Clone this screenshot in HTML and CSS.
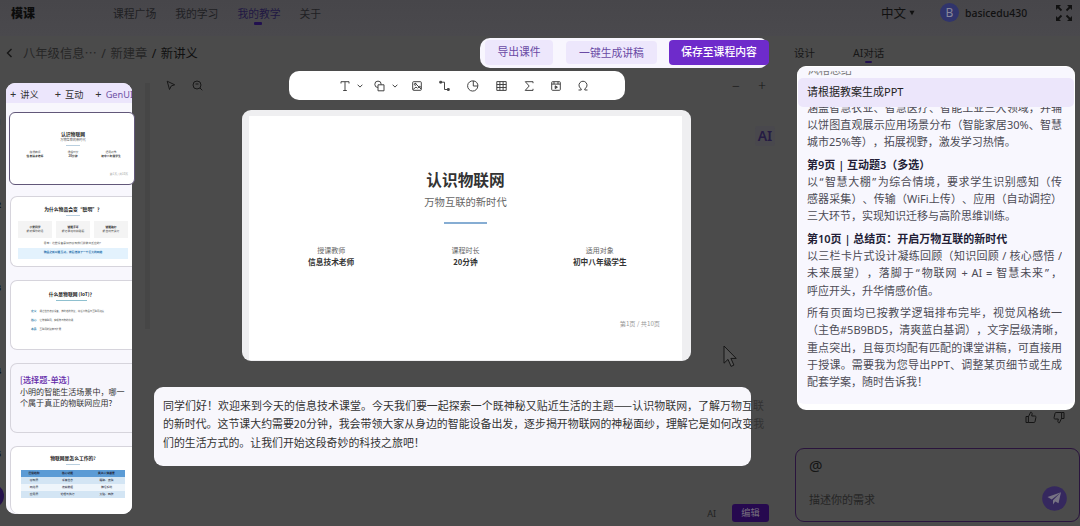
FILE: index.html
```
<!DOCTYPE html>
<html>
<head>
    <meta charset="UTF-8">
    <title>模课</title>
    <link rel="stylesheet" href="styles.css">
</head>
<body>
    <header class="topbar">
        <div class="logo">模课</div>
        <nav class="menu">
            <a>课程广场</a>
            <a>我的学习</a>
            <a class="active">我的教学</a>
            <a>关于</a>
        </nav>
        <div class="lang">中文<svg width="6" height="6" viewBox="0 0 6 6"><path d="M0.5 0.8h5L3 5.2z" fill="#111"/></svg></div>
        <div class="avatar">B</div>
        <div class="username">basicedu430</div>
        <svg class="expand" width="16" height="16" viewBox="0 0 16 16" fill="#111" stroke="#111" stroke-width="1.8">
            <path d="M2 2l3.5 3.5M14 2l-3.5 3.5M2 14l3.5-3.5M14 14l-3.5-3.5"/>
            <path stroke="none" d="M0 0h5L0 5zM16 0v5L11 0zM0 16v-5l5 5zM16 16h-5l5-5z"/>
        </svg>
    </header>

    <main class="workspace">
        <section class="editor">
            <div class="titlebar">
                <div class="breadcrumb">
                    <svg width="7" height="10" viewBox="0 0 7 10"><path d="M5.5 1L1.5 5l4 4" fill="none" stroke="#161616" stroke-width="1.4"/></svg>
                    <span>八年级信息⋯</span><span class="sep">/</span><span>新建章</span><span class="sep dark">/</span><span class="current">新讲义</span>
                </div>
                <div class="actions">
                    <button class="btn export">导出课件</button>
                    <button class="btn script">一键生成讲稿</button>
                    <button class="btn save">保存至课程内容</button>
                </div>
            </div>

            <div class="editor-body">
                <div class="numbers">
                    <span>1</span><span>2</span><span>3</span><span>4</span><span>5</span>
                    <i class="bubble-dot"></i>
                </div>
                <aside class="outline">
                    <div class="outline-tabs"><span><b>+</b>讲义</span><span><b>+</b>互动</span><span class="gen"><b>+</b>GenUI</span></div>
                    <div class="thumb selected">
                        <h4>认识物联网</h4>
                        <p class="sub">万物互联的新时代</p>
                        <hr>
                        <div class="trio"><p>授课教师<b>信息技术老师</b></p><p>课程时长<b>20分钟</b></p><p>适用对象<b>初中八年级学生</b></p></div>
                        <p class="page">第1页 / 共10页</p>
                    </div>
                    <div class="thumb why">
                        <h4>为什么物品会变“聪明”？</h4>
                        <hr>
                        <div class="boxes"><p><b>小爱同学</b>能听懂你的话</p><p><b>智能手环</b>能记录运动和睡眠</p><p><b>智能路灯</b>能自动开关灯</p></div>
                        <p class="ask">思考：这些设备是如何感知我们并做出反应的？</p>
                        <p class="answer">物品之所以能互动，背后连接了一个巨大的网络</p>
                    </div>
                    <div class="thumb what">
                        <h4>什么是物联网 (IoT)？</h4>
                        <hr>
                        <p><b>定义</b>通过信息传感设备，按约定的协议，将任何物品与互联网连接</p>
                        <p><b>核心</b>让物体联网，实现物与物的沟通</p>
                        <p><b>本质</b>互联网的延伸与扩展</p>
                    </div>
                    <div class="thumb quiz">
                        <h5>[选择题-单选]</h5>
                        <p>小明的智能生活场景中，哪一</p>
                        <p>个属于真正的物联网应用?</p>
                    </div>
                    <div class="thumb how">
                        <h4>物联网是怎么工作的?</h4>
                        <hr>
                        <table>
                            <tr><th>层级结构</th><th>核心功能</th><th>类比人体器官</th></tr>
                            <tr><td>感知层</td><td>采集信息</td><td>眼睛、皮肤</td></tr>
                            <tr><td>网络层</td><td>传输数据</td><td>神经系统</td></tr>
                            <tr><td>应用层</td><td>处理与执行</td><td>大脑、四肢</td></tr>
                        </table>
                    </div>
                </aside>
                <div class="scroll-thumb"></div>

                <div class="stage">
                    <div class="tools-row">
                        <div class="pointers">
                            <svg width="10" height="11" viewBox="0 0 10 11"><path d="M1.2 1.2l7.5 3.6-3.4 1.1-1.8 3.6z"/></svg>
                            <svg width="11" height="11" viewBox="0 0 11 11"><circle cx="5" cy="5" r="4"/><path d="M8 8l2.3 2.3M3.5 4h3"/></svg>
                        </div>
                        <div class="tools">
                            <svg width="10" height="12" viewBox="0 0 10 12"><path d="M1 3.5V1.7h8v1.8M5 1.7v8.8M3.2 10.5h3.6"/></svg>
                            <svg class="caret" width="6" height="4" viewBox="0 0 6 4"><path d="M.6.7L3 3.1 5.4.7"/></svg>
                            <svg class="shapes" width="11" height="12" viewBox="0 0 11 12"><circle cx="4" cy="4.3" r="3.2"/><path d="M4 4.8h6v6H4z" fill="#fff"/></svg>
                            <svg class="caret" width="6" height="4" viewBox="0 0 6 4"><path d="M.6.7L3 3.1 5.4.7"/></svg>
                            <svg class="image" width="10" height="12" viewBox="0 0 10 12"><rect x=".7" y="1.7" width="8.6" height="8.6" rx=".8"/><circle cx="3.3" cy="4.3" r="1"/><path d="M1 9.6l3-2.6 1.4 1.2M3 3l6 6M5.8 8.2l1.7-2 1.7 1.2"/></svg>
                            <svg width="11" height="12" viewBox="0 0 11 12"><path d="M2 2.2h3.5v7.3H9"/><path d="M.8 1.3h1.7v1.8H.8zM8.5 8.6h1.7v1.8H8.5z" fill="#444"/></svg>
                            <svg width="12" height="12" viewBox="0 0 12 12"><path d="M6.3.9A5.1 5.1 0 1 0 10.8 6"/><path d="M6.3.9V6h4.6A4.8 4.8 0 0 0 6.3.9z"/></svg>
                            <svg width="11" height="12" viewBox="0 0 11 12"><path d="M.8 1.6h9.4v8.8H.8zM.8 4.5h9.4M.8 7.5h9.4M3.9 1.6v8.8M7.1 1.6v8.8"/></svg>
                            <svg width="10" height="12" viewBox="0 0 10 12"><path d="M9 3.2V1.7H1.3L5.2 6l-4 4.4H9V8.8"/></svg>
                            <svg width="10" height="12" viewBox="0 0 10 12"><rect x=".7" y="1.7" width="8.6" height="8.6" rx=".8"/><path d="M.7 4.1h8.6M3 1.7v2.4M7 1.7v2.4"/><path d="M4.2 5.8v2.8l2.2-1.4z" fill="#444"/></svg>
                            <svg width="10" height="12" viewBox="0 0 10 12"><path d="M.5 10h2.7V8.8A4 4 0 1 1 6.8 8.8V10h2.7"/></svg>
                        </div>
                        <div class="zoom"><span>−</span><span>+</span></div>
                    </div>

                    <div class="slide-row">
                        <div class="slide-frame">
                            <div class="slide">
                                <h1>认识物联网</h1>
                                <p class="subtitle">万物互联的新时代</p>
                                <hr>
                                <div class="facts">
                                    <div>授课教师<b>信息技术老师</b></div>
                                    <div>课程时长<b>20分钟</b></div>
                                    <div>适用对象<b>初中八年级学生</b></div>
                                </div>
                                <p class="page">第1页 / 共10页</p>
                            </div>
                        </div>
                        <div class="ai-badge">AI</div>
                    </div>

                    <div class="notes">
                        <p class="full">同学们好！欢迎来到今天的信息技术课堂。今天我们要一起探索一个既神秘又贴近生活的主题——认识物联网，了解万物互联</p>
                        <p class="full">的新时代。这节课大约需要20分钟，我会带领大家从身边的智能设备出发，逐步揭开物联网的神秘面纱，理解它是如何改变我</p>
                        <p>们的生活方式的。让我们开始这段奇妙的科技之旅吧！</p>
                    </div>

                    <div class="bottom"><span>AI</span><button class="edit">编辑</button></div>
                </div>
            </div>
        </section>

        <section class="assistant">
            <div class="tabs"><span>设计</span><span class="active">AI对话</span></div>
            <div class="chat">
                <div class="previous"><p>风格总结</p></div>
                <div class="question">请根据教案生成PPT</div>
                <div class="answer-text">
                    <p class="full">涵盖智慧农业、智慧医疗、智能工业三大领域，并辅</p>
                    <p class="full">以饼图直观展示应用场景分布（智能家居30%、智慧</p>
                    <p>城市25%等），拓展视野，激发学习热情。</p>
                    <h3>第9页 | 互动题3（多选）</h3>
                    <p class="full">以<q>“</q>智慧大棚<q>”</q>为综合情境，要求学生识别感知（传</p>
                    <p class="full">感器采集）、传输（WiFi上传）、应用（自动调控）</p>
                    <p>三大环节，实现知识迁移与高阶思维训练。</p>
                    <h3>第10页 | 总结页：开启万物互联的新时代</h3>
                    <p class="full">以三栏卡片式设计凝练回顾（知识回顾 / 核心感悟 /</p>
                    <p class="full">未来展望），落脚于<q>“</q>物联网 + AI = 智慧未来<q>”</q>，</p>
                    <p>呼应开头，升华情感价值。</p>
                    <p class="full gap">所有页面均已按教学逻辑排布完毕，视觉风格统一</p>
                    <p class="full">（主色#5B9BD5，清爽蓝白基调），文字层级清晰，</p>
                    <p class="full">重点突出，且每页均配有匹配的课堂讲稿，可直接用</p>
                    <p class="full">于授课。需要我为您导出PPT、调整某页细节或生成</p>
                    <p>配套学案，随时告诉我！</p>
                </div>
            </div>
            <div class="feedback">
                <svg width="12" height="13" viewBox="0 0 12 13"><path d="M1 5.5h2.4v6H1zM3.4 5.8L5.6 1.2c1.3 0 1.7.8 1.5 1.8l-.4 2h3.1c.9 0 1.3.6 1.1 1.4l-.9 4.2c-.1.6-.5.9-1.1.9H3.4"/></svg>
                <svg class="down" width="12" height="13" viewBox="0 0 12 13"><path d="M1 5.5h2.4v6H1zM3.4 5.8L5.6 1.2c1.3 0 1.7.8 1.5 1.8l-.4 2h3.1c.9 0 1.3.6 1.1 1.4l-.9 4.2c-.1.6-.5.9-1.1.9H3.4"/></svg>
            </div>
            <div class="prompt">
                <div class="at">@</div>
                <div class="prompt-row">
                    <span>描述你的需求</span>
                    <svg width="25" height="25" viewBox="0 0 25 25"><circle cx="12.5" cy="12.5" r="12.3" fill="#35285e"/><path d="M19 6.3L5.5 11l4.2 2.5zM19 6.3l-8 8v4.2l2.2-3 3.3 1.7z" fill="#777384"/></svg>
                </div>
            </div>
        </section>
    </main>

    <svg class="cursor" width="15" height="23" viewBox="0 0 15 23"><path d="M1 1v17.2l4-3.8 3.1 7 2.8-1.3-3-6.7h5.3z" fill="#555" stroke="#161616"/></svg>
</body>
</html>
```
FILE: styles.css
```
* {
    margin: 0;
    padding: 0;
    box-sizing: border-box;
}

body {
    width: 1080px;
    height: 526px;
    overflow: hidden;
    background: #4b4b4b;
    color: #222;
    font-family: "Noto Sans", "Noto Sans CJK SC", sans-serif;
    font-size: 11px;
    white-space: nowrap;
    text-spacing-trim: space-all;
}

svg {
    display: block;
    flex-shrink: 0;
}

hr {
    border: none;
}

button {
    border: none;
    font-family: inherit;
}

q {
    padding: 0 1px;
}

q::before,
q::after {
    content: none;
}

/* top bar */
.topbar {
    height: 36px;
    padding: 0 8px 11px 11px;
    display: flex;
    align-items: center;
    background: linear-gradient(#47464a, #4a494d);
}

.logo {
    width: 102px;
    font-size: 12px;
    font-weight: 900;
    color: #0c0c0c;
}

.menu {
    display: flex;
    gap: 19px;
    flex: 1;
}

.menu a {
    position: relative;
    color: #201f23;
    font-size: 10.8px;
}

.menu .active {
    color: #211843;
}

.menu .active::after,
.tabs .active::after {
    content: "";
    position: absolute;
    left: 17px;
    bottom: -4px;
    width: 8px;
    height: 3px;
    border-radius: 1px;
    background: #21104f;
}

.lang {
    display: flex;
    align-items: center;
    gap: 3px;
    width: 59px;
    font-size: 12.5px;
    color: #111;
}

.avatar {
    width: 19px;
    height: 19px;
    border-radius: 50%;
    background: #30346c;
    color: #87879b;
    font-size: 12px;
    line-height: 19px;
    text-align: center;
}

.username {
    width: 91px;
    margin-left: 6px;
    font-size: 10.4px;
    font-weight: 500;
    color: #111;
}

/* main areas */
.workspace {
    display: flex;
    height: 490px;
}

.editor {
    width: 780px;
}

.titlebar {
    display: flex;
    justify-content: space-between;
    height: 35px;
    padding: 2px 11px 0 6px;
}

.breadcrumb {
    display: flex;
    align-items: center;
    height: 30px;
    font-size: 12.3px;
    color: #262626;
}

.breadcrumb svg {
    margin-right: 10px;
}

.breadcrumb .sep {
    margin: 0 4.5px;
}

.breadcrumb .current,
.breadcrumb .dark {
    color: #101010;
}

.actions {
    display: flex;
    width: 289px;
    height: 30px;
    padding: 2px 0 0 5px;
    border-radius: 10px;
    background: #f8f6fe;
}

.btn {
    height: 25px;
    border-radius: 4px;
    background: #ede7fc;
    color: #6a4aa5;
    font-size: 10.8px;
    line-height: 22px;
}

.export {
    width: 68px;
    padding-bottom: 2px;
}

.script {
    width: 91px;
    height: 23px;
    margin: 1px 12px 0 13px;
    line-height: 23px;
}

.save {
    width: 100px;
    padding-bottom: 2px;
    background: #6e2bcb;
    color: #fff;
    font-weight: 500;
}

.editor-body {
    display: flex;
    height: 455px;
}

/* left column */
.numbers {
    position: relative;
    width: 6px;
    padding-top: 44px;
    overflow: hidden;
}

.numbers span {
    display: block;
    height: 83px;
    margin-left: -4px;
    font-size: 9px;
    font-weight: 700;
    color: #111;
}

.bubble-dot {
    position: absolute;
    left: -20px;
    top: 413px;
    width: 24px;
    height: 24px;
    border-radius: 50%;
    background: #24104a;
}

.outline {
    width: 126px;
    height: 431px;
    margin-top: 12px;
    padding-left: 4px;
    border-radius: 9px;
    background: #f8f7fd;
}

.outline-tabs {
    display: flex;
    align-items: center;
    gap: 16px;
    height: 20px;
    margin-left: -4px;
    padding-left: 4px;
    border-radius: 9px 9px 0 0;
    background: #ece6fc;
    overflow: hidden;
    font-size: 9.2px;
    color: #333;
}

.outline-tabs b {
    margin-right: 4px;
    font-size: 11px;
    font-weight: 400;
}

.outline-tabs .gen {
    margin-left: -4px;
    color: #6f52a5;
}

.outline-tabs .gen b {
    color: #333;
}

.thumb {
    width: 122px;
    height: 70px;
    margin-bottom: 13px;
    border: 1px solid #d6d4dc;
    border-right: none;
    border-radius: 7px 0 0 7px;
    background: #fff;
    overflow: hidden;
    text-align: center;
    font-family: "Noto Sans CJK SC", sans-serif;
    font-size: 2.8px;
    color: #555;
}

.thumb h4 {
    font-size: 4.8px;
    line-height: 7px;
    color: #222;
}

.thumb hr {
    width: 14px;
    height: 1px;
    margin: 3px auto;
    background: #b9cfdf;
}

.thumb b {
    color: #222;
}

.thumb.selected {
    position: relative;
    width: 126px;
    height: 73px;
    margin: 9px 0 11px -1px;
    padding: 17px 0 0 2px;
    border: 1.5px solid #615779;
    border-radius: 6px;
}

.selected .sub {
    font-size: 3.2px;
    line-height: 5px;
}

.trio {
    display: grid;
    grid-template-columns: 1fr 1fr 1fr;
    padding: 0 4px;
    line-height: 3.6px;
    margin-top: 5px;
}

.trio b {
    display: block;
}

.selected .page {
    margin: 14px 6px 0;
    text-align: right;
    color: #999;
}

.why {
    height: 71px;
    padding: 8px 4px 0 7px;
}

.why hr {
    margin: 3px auto 5px;
}

.boxes {
    display: grid;
    grid-template-columns: 1fr 1fr 1fr;
    gap: 4px;
}

.boxes p {
    height: 17px;
    padding-top: 4px;
    background: #f4f4f4;
    line-height: 4px;
}

.boxes b {
    display: block;
}

.ask {
    margin: 2px 0;
    line-height: 6px;
}

.why .answer {
    height: 11px;
    background: #e3f2fd;
    color: #1769a8;
    font-weight: 700;
    line-height: 9px;
}

.what {
    padding-top: 9px;
}

.what hr {
    width: 31px;
    margin: 3px auto 6px;
    background: #8fc0cf;
}

.what p {
    padding-left: 20px;
    text-align: left;
    font-size: 2.4px;
    line-height: 9px;
}

.what p b {
    margin-right: 3px;
    font-size: 2.8px;
    color: #3d86ad;
}

.quiz {
    padding: 9px 0 0 9px;
    background: #f7f6fc;
    text-align: left;
}

.quiz h5 {
    font-size: 8.2px;
    font-weight: 500;
    line-height: 13px;
    color: #6228a8;
}

.quiz p {
    font-size: 8.05px;
    line-height: 11px;
    color: #333;
}

.how {
    height: 68px;
    margin: 0;
    padding: 7px 7px 0 10px;
    border-bottom: none;
    border-radius: 7px 0 9px 9px;
}

.how table {
    width: 104px;
    margin-top: 5px;
    border-collapse: collapse;
    table-layout: fixed;
    line-height: 5.8px;
}

.how td,
.how th {
    height: 7px;
    color: #223;
}

.how th {
    background: #5b9bd5;
}

.how th:first-child {
    width: 26px;
}

.how th:last-child {
    width: 37px;
}

.how tr:nth-child(even) td {
    background: #d3e5f4;
}

.how tr:nth-child(3) td {
    background: #eef5fb;
}

.scroll-thumb {
    width: 5px;
    height: 246px;
    margin: 12px 0 0 13px;
    background: #464646;
}

/* canvas */
.stage {
    width: 630px;
}

.tools-row {
    display: flex;
    align-items: center;
    height: 29px;
}

.pointers {
    display: flex;
    gap: 16px;
    width: 139px;
    padding-left: 16px;
    fill: none;
    stroke: #181818;
}

.tools {
    display: flex;
    align-items: center;
    width: 336px;
    height: 29px;
    padding-left: 51px;
    border-radius: 10px;
    background: #fff;
    fill: none;
    stroke: #444;
    stroke-width: 1;
}

.tools svg + svg {
    margin-left: 17px;
}

.tools svg + .caret {
    margin-left: 7px;
}

.tools .caret + .shapes {
    margin-left: 11px;
}

.tools .caret + .image {
    margin-left: 14px;
}

.zoom {
    display: flex;
    gap: 18px;
    margin-left: 107px;
    font-size: 14px;
    font-weight: 300;
    color: #161616;
}

.slide-row {
    display: flex;
    height: 251px;
    margin-top: 10px;
    padding-left: 92px;
}

.slide-frame {
    width: 449px;
    height: 251px;
    padding: 6px 9px 1px 7px;
    border-radius: 9px;
    background: #efeff1;
}

.slide {
    height: 244px;
    padding-top: 51px;
    background: #fff;
    text-align: center;
    font-family: "Noto Sans CJK SC", sans-serif;
}

.slide h1 {
    font-size: 15.7px;
    line-height: 26px;
    color: #333;
}

.slide .subtitle {
    font-size: 10.3px;
    line-height: 18px;
    color: #666;
}

.slide hr {
    width: 43px;
    height: 2px;
    margin: 11px auto 0;
    background: #86add3;
}

.facts {
    display: grid;
    grid-template-columns: 1fr 1fr 1fr;
    padding: 0 15px;
    margin-top: 20px;
    font-size: 7px;
    line-height: 12px;
    color: #666;
}

.facts b {
    display: block;
    font-size: 7.7px;
    color: #333;
}

.slide .page {
    margin: 51px 22px 0;
    text-align: right;
    font-size: 6.2px;
    line-height: 9px;
    color: #999;
}

.ai-badge {
    width: 20px;
    height: 20px;
    margin: 16px 0 0 64px;
    border-radius: 3px;
    background: #49484d;
    font-size: 14px;
    font-weight: 600;
    line-height: 20px;
    text-align: center;
    color: #251b43;
}

.notes {
    width: 597px;
    height: 79px;
    margin: 26px 0 0 4px;
    padding: 9px 0 0 9px;
    border-radius: 9px;
    background: #f8f7fc;
    font-family: "Noto Sans CJK SC", sans-serif;
    font-size: 10.92px;
    line-height: 18.3px;
    color: #333;
}

.notes p {
    width: 601px;
}

.bottom {
    display: flex;
    align-items: center;
    justify-content: flex-end;
    gap: 16px;
    height: 18px;
    margin: 38px 11px 0 0;
    font-size: 9px;
    color: #222;
}

.edit {
    width: 37px;
    height: 18px;
    border-radius: 3px;
    background: #26094f;
    color: #77717f;
    font-size: 9.2px;
    line-height: 18px;
}

/* assistant */
.assistant {
    width: 300px;
    padding: 9px 0 0 14px;
}

.tabs {
    display: flex;
    gap: 38px;
    height: 21px;
    font-size: 10.5px;
    line-height: 17px;
    color: #171717;
}

.tabs span {
    position: relative;
}

.tabs .active::after {
    left: 12px;
    bottom: 3px;
    width: 7px;
    height: 2px;
}

.chat {
    width: 278px;
    height: 344px;
    margin-left: 3px;
    border-radius: 9px;
    background: #f8f7fe;
    border: 1px solid #fff;
    border-bottom-width: 6px;
    overflow: hidden;
}

.previous {
    height: 7px;
    margin: 4px 10px 0;
    overflow: hidden;
    line-height: 1px;
    color: #777;
}

.previous p {
    margin-top: -2px;
}

.question {
    height: 29px;
    padding-left: 9px;
    border-radius: 5px;
    background: #ece6fb;
    line-height: 28px;
    color: #222;
}

.answer-text {
    width: 255px;
    margin-left: 9px;
    overflow: hidden;
    line-height: 17.15px;
    color: #4c4b55;
}

.answer-text p:first-child {
    margin-top: -8px;
}

.answer-text h3 {
    margin-top: 5.5px;
    font-size: 11px;
    font-weight: 600;
    color: #221d36;
}

.answer-text .gap {
    margin-top: 5.5px;
}

/* lines that fill the whole measure */
.full {
    text-align: justify;
    text-align-last: justify;
}

.feedback {
    display: flex;
    justify-content: flex-end;
    gap: 16px;
    margin: 1px 15px 0 0;
    height: 17px;
    fill: none;
    stroke: #151515;
}

.feedback .down {
    transform: rotate(180deg);
}

.prompt {
    width: 285px;
    height: 74px;
    margin: 20px 0 0 1px;
    padding: 6px 12px 0 13px;
    border: 1.5px solid #2a143d;
    border-radius: 9px;
}

.at {
    height: 31px;
    font-size: 15px;
    line-height: 20px;
    color: #151515;
}

.prompt-row {
    display: flex;
    align-items: center;
    justify-content: space-between;
    color: #252525;
}

.cursor {
    position: absolute;
    left: 723px;
    top: 345px;
}
```
